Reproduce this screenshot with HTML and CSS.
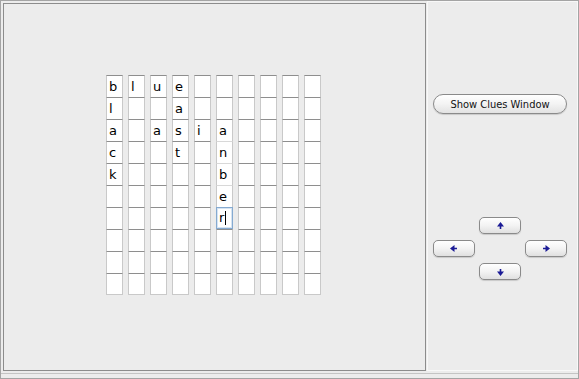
FILE: index.html
```html
<!DOCTYPE html>
<html lang="en">
<head>
    <meta charset="UTF-8">
    <title>Crossword</title>
    <link rel="stylesheet" href="styles.css">
</head>
<body>
    <div class="window">
        <div class="main">
            <div class="board-panel">
                <div class="grid" id="grid"></div>
            </div>
            <div class="side-panel">
                <button class="clues-button">Show Clues Window</button>
                <div class="arrows">
                    <button class="arrow up">
                        <svg width="7" height="8" viewBox="0 0 7 8"><polygon points="3.5,0 7,4.5 4.3,4.5 4.3,7 2.7,7 2.7,4.5 0,4.5"/></svg>
                    </button>
                    <button class="arrow left">
                        <svg width="8" height="7" viewBox="0 0 8 7"><polygon points="0,3.5 4.5,0 4.5,2.7 7,2.7 7,4.3 4.5,4.3 4.5,7"/></svg>
                    </button>
                    <button class="arrow right">
                        <svg width="8" height="7" viewBox="0 0 8 7"><polygon points="8,3.5 3.5,0 3.5,2.7 1,2.7 1,4.3 3.5,4.3 3.5,7"/></svg>
                    </button>
                    <button class="arrow down">
                        <svg width="7" height="8" viewBox="0 0 7 8"><polygon points="3.5,8 7,3.5 4.3,3.5 4.3,1 2.7,1 2.7,3.5 0,3.5"/></svg>
                    </button>
                </div>
            </div>
        </div>
        <div class="status"></div>
    </div>

    <script>
        // letters already typed in, row by row ('.' = empty)
        const rows = [
            'blue......',
            'l..a......',
            'a.asia....',
            'c..t.n....',
            'k....b....',
            '.....e....',
            '.....r....',
            '..........',
            '..........',
            '..........'
        ];
        const grid = document.getElementById('grid');

        rows.forEach((row, r) => {
            row.split('').forEach((ch, c) => {
                const cell = document.createElement('div');
                cell.className = 'cell';
                if (r === rows.length - 1) cell.classList.add('last');
                if (c === 5 && r >= 3 && r <= 5) cell.classList.add('plain');
                if (ch !== '.') cell.textContent = ch;
                if (r === 6 && c === 5) {
                    cell.classList.add('focused');
                    const caret = document.createElement('span');
                    caret.className = 'caret';
                    cell.appendChild(caret);
                }
                grid.appendChild(cell);
            });
        });
    </script>
</body>
</html>
```

FILE: styles.css
```css
* {
    box-sizing: border-box;
}

body {
    margin: 0;
    background: #ececec;
    font-family: "DejaVu Sans", "Liberation Sans", sans-serif;
}

.window {
    width: 579px;
    height: 379px;
    border: 1px solid #a4a4a4;
    display: flex;
    flex-direction: column;
}

.main {
    display: flex;
    height: 370px;
}

.board-panel {
    width: 423px;
    height: 368px;
    margin: 2px 0 0 2px;
    border: 1px solid #8c8c8c;
    padding: 71px 0 0 102px;
}

.grid {
    display: grid;
    grid-template-columns: repeat(10, 17px);
    grid-auto-rows: 22px;
    column-gap: 5px;
}

.cell {
    background: #fff;
    border: 1px solid #c9c9c9;
    border-top-color: #8e8e8e;
    border-bottom: none;
    font-size: 13px;
    line-height: 21px;
    padding-left: 2px;
    color: #000;
}

.cell.last {
    border-bottom: 1px solid #c9c9c9;
}

.cell.plain {
    border-top-color: #d8d8d8;
}

.cell.focused {
    border: 1px solid #86aad0;
    box-shadow: inset 0 0 0 1px #d6e4f2;
    line-height: 20px;
}

.caret {
    display: inline-block;
    width: 1px;
    height: 14px;
    background: #000;
    vertical-align: -3px;
    margin-left: 1px;
}

.side-panel {
    flex: 1;
    margin-left: 1px;
    border: 1px solid #f8f8f8;
    padding: 92px 0 0 5px;
}

.clues-button {
    display: block;
    width: 134px;
    height: 20px;
    padding: 0;
    border: 1px solid #8a8a8a;
    border-radius: 10px;
    background: linear-gradient(#ffffff, #f3f3f3 50%, #e2e2e2);
    box-shadow: 0 1px 1px rgba(0, 0, 0, 0.15);
    font-family: "DejaVu Sans Condensed", "DejaVu Sans", sans-serif;
    font-stretch: condensed;
    font-size: 11px;
    color: #111;
}

.arrows {
    display: grid;
    grid-template-columns: repeat(3, 42px);
    grid-template-rows: repeat(3, 17px);
    column-gap: 4px;
    row-gap: 6px;
    margin-top: 103px;
}

.arrow {
    padding: 0;
    border: 1px solid #8a8a8a;
    border-radius: 5px;
    background: linear-gradient(#ffffff, #f3f3f3 50%, #e0e0e0);
    box-shadow: 0 1px 1px rgba(0, 0, 0, 0.15);
    display: flex;
    align-items: center;
    justify-content: center;
}

.arrow svg {
    fill: #1b1b96;
}

.arrow.up {
    grid-column: 2;
    grid-row: 1;
}

.arrow.left {
    grid-column: 1;
    grid-row: 2;
}

.arrow.right {
    grid-column: 3;
    grid-row: 2;
}

.arrow.down {
    grid-column: 2;
    grid-row: 3;
}

.status {
    margin-top: 2px;
    border-top: 1px solid #c4c4c4;
    flex: 1;
}
```
